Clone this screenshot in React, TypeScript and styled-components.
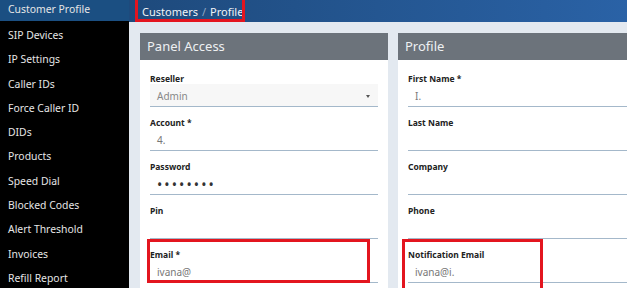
import styled, { createGlobalStyle } from 'styled-components'

const GlobalStyle = createGlobalStyle`
  html, body {
    margin: 0;
    padding: 0;
    width: 627px;
    height: 288px;
    overflow: hidden;
    background: #e3e9f0;
    font-family: "Noto Sans", "DejaVu Sans", sans-serif;
  }
  * { box-sizing: border-box; }
`

type Field = {
  label: string
  value?: string
  kind?: 'select' | 'password' | 'text'
  mark?: { left: number; width: number; height: number }
}

const menu = [
  'Customer Profile',
  'SIP Devices',
  'IP Settings',
  'Caller IDs',
  'Force Caller ID',
  'DIDs',
  'Products',
  'Speed Dial',
  'Blocked Codes',
  'Alert Threshold',
  'Invoices',
  'Refill Report',
]

const accessFields: Array<Field> = [
  { label: 'Reseller', value: 'Admin', kind: 'select' },
  { label: 'Account *', value: '4.' },
  { label: 'Password', value: '••••••••', kind: 'password' },
  { label: 'Pin' },
  { label: 'Email *', value: 'ivana@', mark: { left: -3, width: 223, height: 44 } },
]

const profileFields: Array<Field> = [
  { label: 'First Name *', value: 'I.' },
  { label: 'Last Name' },
  { label: 'Company' },
  { label: 'Phone' },
  { label: 'Notification Email', value: 'ivana@i.', mark: { left: -6, width: 141, height: 52 } },
]

function Panel({ title, fields }: { title: string; fields: Array<Field> }) {
  return (
    <Card>
      <CardHeader>{title}</CardHeader>
      <CardBody>
        {fields.map((f) => (
          <FieldBox key={f.label}>
            {f.mark && <Mark style={{ left: f.mark.left, width: f.mark.width, height: f.mark.height }} />}
            <Label>{f.label}</Label>
            <Input $kind={f.kind}>
              <span>{f.value}</span>
              {f.kind === 'select' && <Caret />}
            </Input>
          </FieldBox>
        ))}
      </CardBody>
    </Card>
  )
}

function App() {
  return (
    <>
      <GlobalStyle />
      <Layout>
        <Sidebar>
          {menu.map((m, i) => (
            <MenuItem key={m} $active={i === 0}>{m}</MenuItem>
          ))}
        </Sidebar>
        <Main>
          <TopBar>
            <Crumbs>
              Customers <Sep>/</Sep> Profile
            </Crumbs>
          </TopBar>
          <Content>
            <Panel title="Panel Access" fields={accessFields} />
            <Panel title="Profile" fields={profileFields} />
          </Content>
        </Main>
      </Layout>
    </>
  )
}

export default App

const Layout = styled.div`
  display: grid;
  grid-template-columns: 129px 1fr;
  width: 627px;
  height: 288px;
  overflow: hidden;
`

const Sidebar = styled.nav`
  background: #000;
  display: flex;
  flex-direction: column;
`

const MenuItem = styled.div<{ $active?: boolean }>`
  flex-shrink: 0;
  display: flex;
  align-items: center;
  padding: 0 0 3px 8px;
  font-size: 10.4px;
  color: #e6e6e6;
  white-space: nowrap;
  background: ${(p) => (p.$active ? '#1b4f82' : 'transparent')};
  height: ${(p) => (p.$active ? '21px' : '24.3px')};
  margin-bottom: ${(p) => (p.$active ? '3.3px' : '0')};
`

const Main = styled.div`
  display: flex;
  flex-direction: column;
  min-width: 0;
`

const TopBar = styled.header`
  height: 22px;
  flex-shrink: 0;
  background: linear-gradient(to right, #1e4a7c, #2a62a6);
  padding-left: 6px;
  display: flex;
`

const Crumbs = styled.div`
  position: relative;
  height: 22px;
  width: 110px;
  padding: 0 0 0 7px;
  display: flex;
  align-items: center;
  gap: 4px;
  font-size: 11px;
  color: #f0f3f7;
  white-space: nowrap;
  &::after {
    content: '';
    position: absolute;
    inset: -3px 0 0 0;
    border: 3px solid #e3151f;
  }
`

const Sep = styled.span`
  color: #8fa7c4;
`

const Content = styled.main`
  flex: 1;
  display: grid;
  grid-template-columns: 248px 248px;
  column-gap: 10px;
  padding: 11px 0 0 11px;
  overflow: hidden;
`

const Card = styled.section`
  background: #fff;
  display: flex;
  flex-direction: column;
`

const CardHeader = styled.div`
  height: 27px;
  background: #6c737b;
  color: #eef0f2;
  font-size: 13px;
  display: flex;
  align-items: center;
  padding: 0 0 1px 7px;
`

const CardBody = styled.div`
  padding: 13px 10px 0 10px;
  display: flex;
  flex-direction: column;
  gap: 10px;
`

const FieldBox = styled.div`
  position: relative;
  display: flex;
  flex-direction: column;
`

const Mark = styled.div`
  position: absolute;
  top: -10px;
  border: 3px solid #e3151f;
  pointer-events: none;
`

const Label = styled.label`
  height: 11px;
  line-height: 11px;
  font-size: 8.5px;
  font-weight: 700;
  color: #222;
`

const Input = styled.div<{ $kind?: string }>`
  height: 23px;
  display: flex;
  align-items: center;
  justify-content: space-between;
  padding: 2px 8px 0 7px;
  border-bottom: 1.5px solid #a4b8ca;
  background: ${(p) => (p.$kind === 'select' ? '#f7f7f7' : '#fff')};
  font-size: ${(p) => (p.$kind === 'password' ? '14px' : '10px')};
  letter-spacing: ${(p) => (p.$kind === 'password' ? '2.1px' : '0')};
  color: ${(p) => (p.$kind === 'password' ? '#333' : p.$kind === 'select' ? '#888' : '#777')};
`

const Caret = styled.span`
  width: 0;
  height: 0;
  border-left: 2.5px solid transparent;
  border-right: 2.5px solid transparent;
  border-top: 3px solid #555;
`
